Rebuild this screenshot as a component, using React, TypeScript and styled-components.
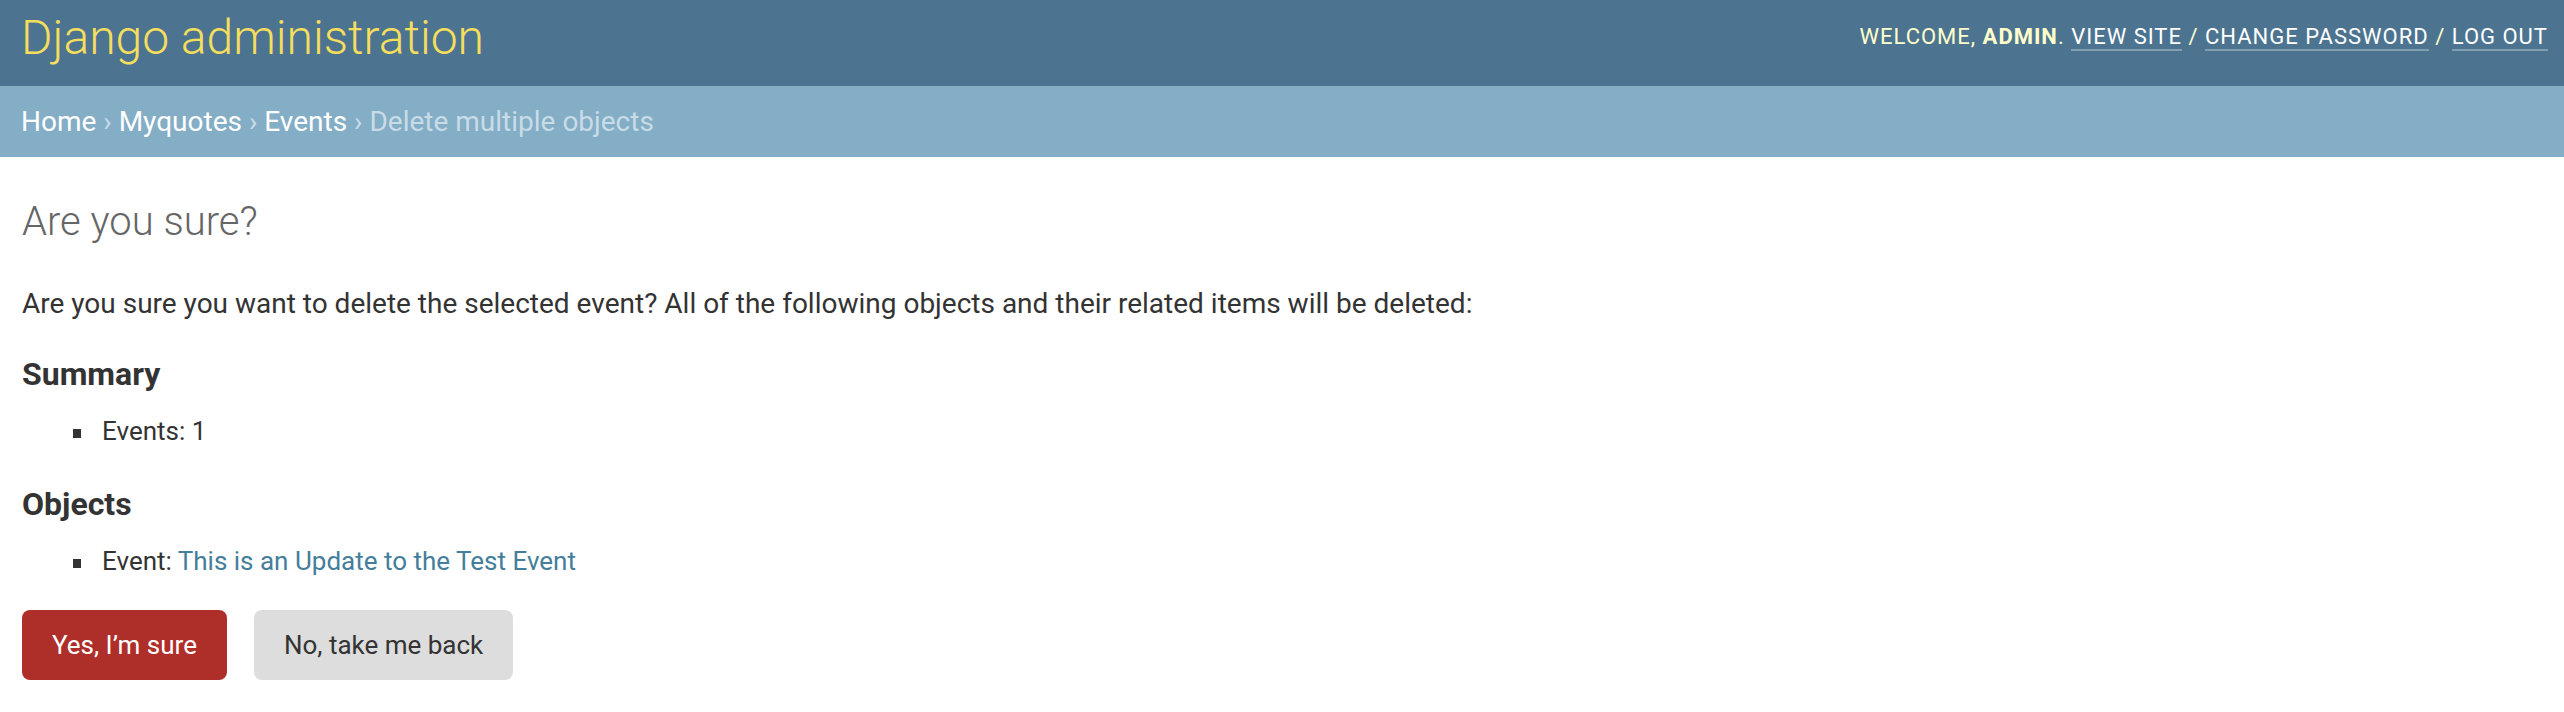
import styled, { createGlobalStyle } from 'styled-components';

const GlobalStyle = createGlobalStyle`
    html, body {
        margin: 0;
        padding: 0;
        background: #ffffff;
    }
    body {
        font-family: Roboto, "Liberation Sans", Arial, sans-serif;
        color: #333333;
        -webkit-font-smoothing: antialiased;
    }
`

const Header = styled.div`
    display: flex;
    justify-content: space-between;
    align-items: flex-start;
    height: 86px;
    box-sizing: border-box;
    padding: 9px 16px 0 21px;
    background: #4c7490;
`

const Branding = styled.h1`
    margin: 0;
    font-size: 48px;
    line-height: 58px;
    font-weight: 300;
    color: #f5dd5d;
`

const UserTools = styled.div`
    margin-top: 12px;
    font-size: 22px;
    line-height: 32px;
    letter-spacing: 1px;
    text-transform: uppercase;
    color: #ffffcc;

    strong {
        font-weight: 700;
    }
`

const ToolLink = styled.a`
    color: #ffffff;
    text-decoration: none;
    border-bottom: 2px solid rgba(255, 255, 255, 0.3);
`

const Breadcrumbs = styled.div`
    padding: 18px 21px 17px;
    background: #84adc6;
    font-size: 28px;
    line-height: 36px;
    color: #c8dce8;

    a {
        color: #ffffff;
        text-decoration: none;
    }
`

const Content = styled.div`
    padding: 41px 22px 40px;
`

const Title = styled.h1`
    margin: 0 0 40px;
    font-size: 40px;
    line-height: 48px;
    font-weight: 300;
    color: #666666;
`

const Lead = styled.p`
    margin: 0 0 32px;
    font-size: 28px;
    line-height: 36px;
`

const SectionTitle = styled.h2`
    margin: 0 0 19px;
    font-size: 32px;
    line-height: 40px;
    font-weight: 700;
    color: #333333;
`

const List = styled.ul<{ $after: number }>`
    margin: 0 0 ${p => p.$after}px;
    padding: 0 0 0 51px;
    list-style: none;
`

const Item = styled.li`
    font-size: 26px;
    line-height: 36px;

    &::before {
        content: '';
        display: inline-block;
        width: 8px;
        height: 9px;
        margin-right: 21px;
        background: #333333;
        vertical-align: middle;
    }

    a {
        color: #447e9b;
        text-decoration: none;
    }
`

const Actions = styled.form`
    display: flex;
    gap: 27px;
    margin: 0;
`

const Button = styled.button<{ $danger?: boolean }>`
    height: 70px;
    padding: 0 30px;
    border: none;
    border-radius: 8px;
    font-family: inherit;
    font-size: 26px;
    background: ${p => (p.$danger ? '#ae2e2a' : '#dddddd')};
    color: ${p => (p.$danger ? '#ffffff' : '#333333')};
    cursor: pointer;
`

export default function App() {
    return <>
        <GlobalStyle />
        <Header>
            <Branding>Django administration</Branding>
            <UserTools>
                Welcome, <strong>admin</strong>. <ToolLink href="#">View site</ToolLink> / <ToolLink href="#">Change password</ToolLink> / <ToolLink href="#">Log out</ToolLink>
            </UserTools>
        </Header>
        <Breadcrumbs>
            <a href="#">Home</a> › <a href="#">Myquotes</a> › <a href="#">Events</a> › Delete multiple objects
        </Breadcrumbs>
        <Content>
            <Title>Are you sure?</Title>
            <Lead>Are you sure you want to delete the selected event? All of the following objects and their related items will be deleted:</Lead>

            <SectionTitle>Summary</SectionTitle>
            <List $after={35}>
                <Item>Events: 1</Item>
            </List>

            <SectionTitle>Objects</SectionTitle>
            <List $after={31}>
                <Item>Event: <a href="#">This is an Update to the Test Event</a></Item>
            </List>

            <Actions onSubmit={e => e.preventDefault()}>
                <Button $danger type="submit">Yes, I’m sure</Button>
                <Button type="button">No, take me back</Button>
            </Actions>
        </Content>
    </>
}
